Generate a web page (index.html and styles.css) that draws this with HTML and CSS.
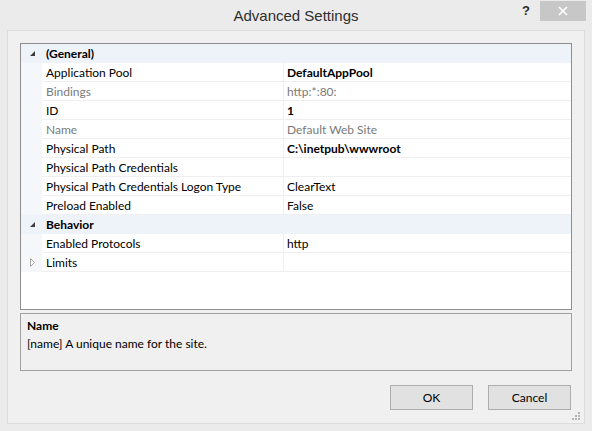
FILE: index.html
```html
<!DOCTYPE html>
<html>
<head>
<meta charset="utf-8">
<link rel="stylesheet" href="styles.css">
</head>
<body>
<div class="window">
  <div class="titlebar">
    <div></div>
    <div class="title">Advanced Settings</div>
    <div class="caption">
      <span class="help">?</span>
      <span class="close"><svg width="10" height="10" viewBox="0 0 10 10"><path d="M1 1 L9 9 M9 1 L1 9" stroke="#fff" stroke-width="1.6" fill="none"/></svg></span>
    </div>
  </div>
  <div class="client">
    <div class="grid">
      <div class="cat">
        <span class="margin"><svg width="7" height="7" viewBox="0 0 7 7"><path d="M6 1 L6 6 L1 6 Z" fill="#3c3c3c"/></svg></span>
        <span class="cat-name">(General)</span>
      </div>
      <div class="row"><span class="margin"></span><span class="name">Application Pool</span><span class="value strong">DefaultAppPool</span></div>
      <div class="row dim"><span class="margin"></span><span class="name">Bindings</span><span class="value">http:*:80:</span></div>
      <div class="row"><span class="margin"></span><span class="name">ID</span><span class="value strong">1</span></div>
      <div class="row dim"><span class="margin"></span><span class="name">Name</span><span class="value">Default Web Site</span></div>
      <div class="row"><span class="margin"></span><span class="name">Physical Path</span><span class="value strong">C:\inetpub\wwwroot</span></div>
      <div class="row"><span class="margin"></span><span class="name">Physical Path Credentials</span><span class="value"></span></div>
      <div class="row"><span class="margin"></span><span class="name">Physical Path Credentials Logon Type</span><span class="value">ClearText</span></div>
      <div class="row"><span class="margin"></span><span class="name">Preload Enabled</span><span class="value">False</span></div>
      <div class="cat">
        <span class="margin"><svg width="7" height="7" viewBox="0 0 7 7"><path d="M6 1 L6 6 L1 6 Z" fill="#3c3c3c"/></svg></span>
        <span class="cat-name">Behavior</span>
      </div>
      <div class="row"><span class="margin"></span><span class="name">Enabled Protocols</span><span class="value">http</span></div>
      <div class="row"><span class="margin"><svg width="7" height="9" viewBox="0 0 7 9"><path d="M1.5 0.5 L5.5 4.5 L1.5 8.5 Z" fill="#fff" stroke="#a8a8a8" stroke-width="1"/></svg></span><span class="name">Limits</span><span class="value"></span></div>
    </div>
    <div class="desc">
      <div class="desc-title">Name</div>
      <div class="desc-text">[name] A unique name for the site.</div>
    </div>
    <div class="buttons">
      <button class="btn">OK</button>
      <button class="btn">Cancel</button>
    </div>
    <svg class="grip" width="9" height="9" viewBox="0 0 9 9">
      <rect x="6" y="0" width="2" height="2" fill="#b5b5b5"/>
      <rect x="3" y="3" width="2" height="2" fill="#b5b5b5"/>
      <rect x="6" y="3" width="2" height="2" fill="#b5b5b5"/>
      <rect x="0" y="6" width="2" height="2" fill="#b5b5b5"/>
      <rect x="3" y="6" width="2" height="2" fill="#b5b5b5"/>
      <rect x="6" y="6" width="2" height="2" fill="#b5b5b5"/>
    </svg>
  </div>
</div>
</body>
</html>
```

FILE: styles.css
```css
* { box-sizing: border-box; }
html, body { margin: 0; padding: 0; }
body {
  width: 592px;
  height: 431px;
  overflow: hidden;
  background: #ebebeb;
  font-family: Lato, "Liberation Sans", Arial, sans-serif;
  font-size: 12px;
  color: #000;
}
.window {
  width: 592px;
  height: 431px;
  background: #ebebeb;
  display: flex;
  flex-direction: column;
}
.titlebar {
  height: 30px;
  display: grid;
  grid-template-columns: 1fr auto 1fr;
  align-items: start;
}
.title {
  font-family: "Liberation Sans", Arial, sans-serif;
  font-size: 15px;
  color: #2e2e2e;
  line-height: 32px;
}
.caption {
  display: flex;
  justify-content: flex-end;
  align-items: flex-start;
  padding-right: 6px;
  padding-top: 1px;
}
.help {
  font-family: "Liberation Sans", Arial, sans-serif;
  font-weight: bold;
  font-size: 13px;
  color: #2b2b2b;
  line-height: 20px;
  margin-right: 10px;
}
.close {
  width: 46px;
  height: 20px;
  background: #c7c7c7;
  display: flex;
  align-items: center;
  justify-content: center;
}
.client {
  position: relative;
  margin: 0 7px;
  height: 394px;
  background: #f0f0f0;
  border: 1px solid #dcdcdc;
  padding: 12px 12px 0 12px;
  display: flex;
  flex-direction: column;
}
.grid {
  height: 267px;
  background: #fff;
  border: 1px solid #8e8e8e;
}
.cat, .row {
  display: flex;
  height: 19px;
  line-height: 19px;
}
.cat {
  background: #eef2f9;
}
.margin {
  width: 21px;
  flex: none;
  display: flex;
  align-items: center;
  justify-content: center;
  padding-left: 2px;
}
.row .margin {
  background: #f5f7fb;
}
.cat-name {
  font-weight: bold;
  padding-left: 4px;
}
.name {
  width: 242px;
  flex: none;
  padding-left: 4px;
  border-right: 1px solid #efefef;
  border-bottom: 1px solid #efefef;
  white-space: nowrap;
}
.value {
  flex: 1;
  padding-left: 3px;
  border-bottom: 1px solid #efefef;
  white-space: nowrap;
}
.strong { font-weight: bold; }
.dim .name, .dim .value { color: #7a7a7a; }
.desc {
  margin-top: 3px;
  height: 58px;
  border: 1px solid #a0a0a0;
  padding: 3px 6px;
  line-height: 18px;
}
.desc-title { font-weight: bold; }
.buttons {
  margin-top: 14px;
  display: flex;
  justify-content: flex-end;
  gap: 15px;
  padding-right: 1px;
}
.btn {
  width: 83px;
  height: 25px;
  background: #e1e1e1;
  border: 1px solid #adadad;
  font-family: Lato, "Liberation Sans", Arial, sans-serif;
  font-size: 12px;
  color: #000;
  padding: 0;
}
.grip {
  position: absolute;
  right: 3px;
  bottom: 2px;
}
```
